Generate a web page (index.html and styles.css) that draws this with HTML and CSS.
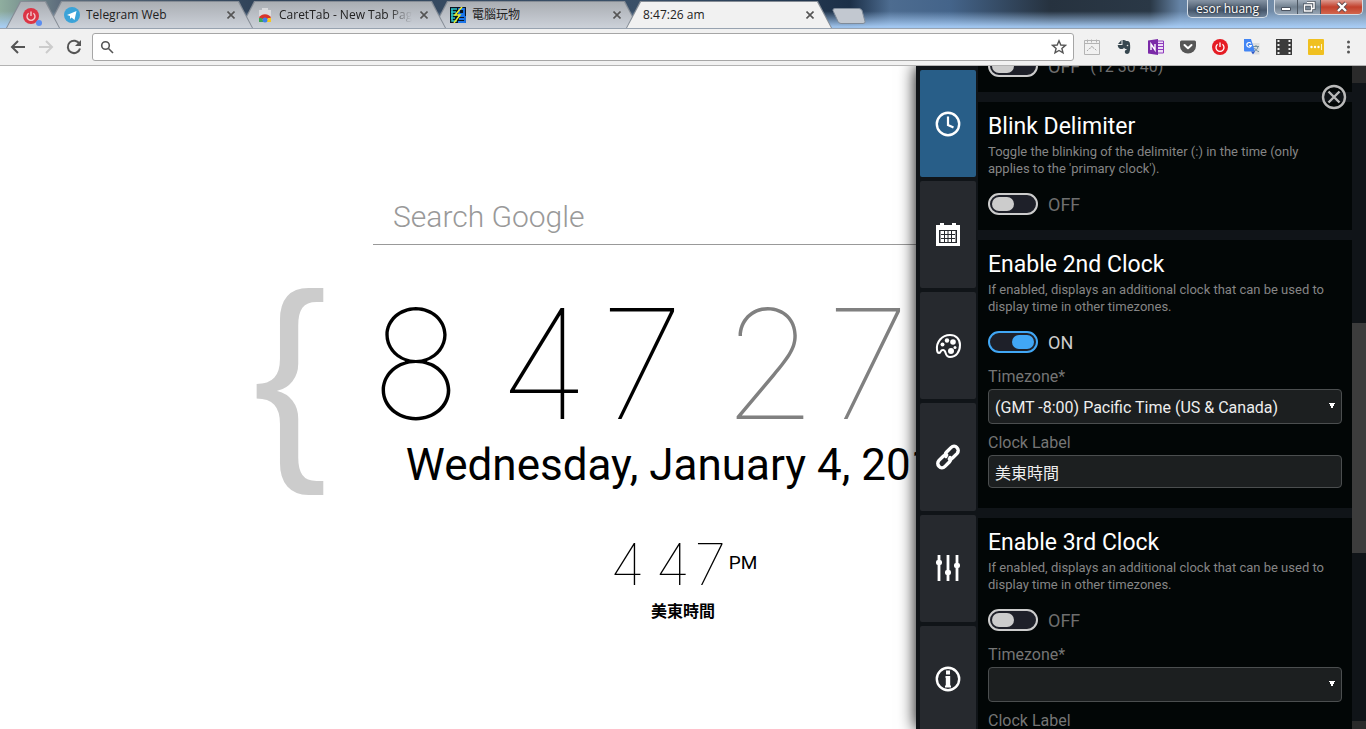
FILE: index.html
```html
<!DOCTYPE html>
<html lang="en">
  <head>
    <meta charset="UTF-8" />
    <meta name="viewport" content="width=device-width, initial-scale=1.0" />
    <title>8:47:26 am</title>
    <link rel="stylesheet" href="styles.css">
  </head>
  <body>
    <header class="browser">
      <div class="tab-strip">
        <div class="tabs">
          <div class="tab pinned">
            <svg class="favicon" viewBox="0 0 16 16">
              <circle cx="8" cy="8" r="8" fill="#dc3545" />
              <path d="M5.6 5.2a4 4 0 1 0 4.8 0M8 3.4V8" fill="none" stroke="#f3c9cc" stroke-width="1.4" />
            </svg>
            <span class="dot"></span>
          </div>
          <div class="tab">
            <svg class="favicon" viewBox="0 0 16 16">
              <circle cx="8" cy="8" r="8" fill="#3ba3d8" />
              <path d="M3 8l9.500-4-2 9L7.500 10.500 6 12V9z" fill="#fff" />
            </svg>
            <span class="tab-title">Telegram Web</span>
            <button class="tab-close" aria-label="Close Telegram Web"><svg viewBox="0 0 8 8"><path d="M.5.5l7 7M7.500.5l-7 7" /></svg></button>
          </div>
          <div class="tab">
            <svg class="favicon" viewBox="0 0 16 16">
              <path d="M2 3h3V1h6v2h3v12H2z" fill="#d9dadd" />
              <path d="M2 11a6.500 6 0 0 1 12 0l-3 1H5z" fill="#d8352b" />
              <path d="M2 11v4h5l-2-4z" fill="#3da554" />
              <path d="M14 11h-4l1 1-2 3h5z" fill="#f7c920" />
              <circle cx="8" cy="13" r="2.500" fill="#3f80e8" />
            </svg>
            <span class="tab-title faded">CaretTab - New Tab Page</span>
            <button class="tab-close" aria-label="Close CaretTab"><svg viewBox="0 0 8 8"><path d="M.5.5l7 7M7.500.5l-7 7" /></svg></button>
          </div>
          <div class="tab">
            <svg class="favicon" viewBox="0 0 16 16">
              <path d="M0 0h16v16H0z" fill="#0a1420" />
              <path d="M1 2h6M1 5h5M1 8h5M1 11h4M2 2v12h5" fill="none" stroke="#2bc5c9" stroke-width="1.5" />
              <path d="M9 2h5v5H9zM8 9h7M9 12h5M8 15h7V9" fill="none" stroke="#1c76ea" stroke-width="1.800" />
              <path d="M12 0L5 8h5L4 16" fill="none" stroke="#e9ee2c" stroke-width="1.500" />
            </svg>
            <span class="tab-title">電腦玩物</span>
            <button class="tab-close" aria-label="Close 電腦玩物"><svg viewBox="0 0 8 8"><path d="M.5.5l7 7M7.500.5l-7 7" /></svg></button>
          </div>
          <div class="tab current">
            <span class="tab-title">8:47:26 am</span>
            <button class="tab-close" aria-label="Close tab"><svg viewBox="0 0 8 8"><path d="M.5.5l7 7M7.500.5l-7 7" /></svg></button>
          </div>
        </div>
        <button class="new-tab" aria-label="New tab">
          <svg viewBox="0 0 34 16"><path d="M3 .5h24q2 0 3 2l3 11q.5 2-2 2H9q-2 0-3-2L1 2.500Q.5.5 3 .5z" /></svg>
        </button>
        <div class="window-controls">
          <button class="user">esor huang</button>
          <div class="window-buttons">
            <button aria-label="Minimize"><svg viewBox="0 0 14 12"><path d="M2.500 6.500h9v3h-9z" fill="#fff" stroke="#4b5360" /></svg></button>
            <button aria-label="Restore"><svg viewBox="0 0 14 12"><path d="M5 1.500h7v6H9.500M2.500 4h7v6h-7z" fill="none" stroke="#414a56" stroke-width="3" /><path d="M5 1.500h7v6H9.500M2.500 4h7v6h-7z" fill="none" stroke="#fff" stroke-width="1.500" /></svg></button>
            <button class="close-window" aria-label="Close window"><svg viewBox="0 0 14 12"><path d="M3 2l8 8M11 2l-8 8" stroke="#5f4a4d" stroke-width="4" /><path d="M3 2l8 8M11 2l-8 8" stroke="#fff" stroke-width="2.400" /></svg></button>
          </div>
        </div>
      </div>
      <div class="toolbar">
        <div class="nav-buttons">
          <button aria-label="Back"><svg viewBox="0 0 16 16"><path d="M15 8H2M8 2L2 8l6 6" /></svg></button>
          <button aria-label="Forward" class="off"><svg viewBox="0 0 16 16"><path d="M1 8h13M8 2l6 6-6 6" /></svg></button>
          <button aria-label="Reload"><svg viewBox="0 0 16 16"><path d="M13.500 5A6.200 6.200 0 1 0 14 9.500" /><path d="M15 1v6H9z" fill="#555" stroke="none" /></svg></button>
        </div>
        <div class="omnibox">
          <svg class="search-icon" viewBox="0 0 14 14"><circle cx="5.500" cy="5.500" r="3.800" /><path d="M8.500 8.500l4.500 4.500" /></svg>
          <input type="text" aria-label="Address" />
          <button class="star" aria-label="Bookmark"><svg viewBox="0 0 16 16"><path d="M8 1.800l1.800 4.200 4.600.4-3.500 3 1.100 4.500L8 11.500l-4 2.400 1.100-4.500-3.500-3 4.600-.4z" /></svg></button>
        </div>
        <div class="extensions">
          <button aria-label="Page chart">
            <svg viewBox="0 0 16 16"><path d="M.5 1.500h15v14H.5zM.5 4.500h15M3.500.5v3M7.500.5v3M12.500.5v3" fill="none" stroke="#b4b4b4" /><path d="M3 12l3-3h1l1-2 1 2h1l3 3" fill="none" stroke="#aaa" stroke-dasharray="2 1" /></svg>
          </button>
          <button aria-label="Evernote">
            <svg viewBox="0 0 16 16"><path d="M5.500 1L2 5h3.500zM6.500 1c2 0 3 .4 3.500 1 2 0 3.500.4 3.800 1.800.6 3 .6 7-.4 9.700-.7 2-4.400 2-4.600-.5-.1-1.700 1-2.300 2.200-2V12.500H10.500V10c-1.200 0-2-.5-2.500-1.500-.4 1.500-2.500 1.800-4.300 1.200C2.500 9 1.700 7.500 1.700 6h4.800z" fill="#37474f" /><circle cx="11.500" cy="6.500" r=".8" fill="#ddd" /></svg>
          </button>
          <button aria-label="OneNote">
            <svg viewBox="0 0 16 16"><path d="M9 2h6.500v12H9z" fill="#efdff7" stroke="#8e3bbd" /><path d="M10 4.500h5M10 7.500h5M10 10.500h5" stroke="#8e3bbd" /><path d="M0 1.500L10 0v16L0 14.500z" fill="#7b2aa8" /><path d="M3 11V5l4 6V5" fill="none" stroke="#fff" stroke-width="1.400" /></svg>
          </button>
          <button aria-label="Pocket">
            <svg viewBox="0 0 16 16"><path d="M1.500 1.500h13q1.500 0 1.500 1.500v4a8 7.500 0 0 1-16 0V3q0-1.500 1.500-1.500z" fill="#565656" /><path d="M4.500 6L8 9.300 11.500 6" fill="none" stroke="#fff" stroke-width="2" stroke-linecap="round" stroke-linejoin="round" /></svg>
          </button>
          <button aria-label="Power">
            <svg viewBox="0 0 16 16"><circle cx="8" cy="8" r="8" fill="#e51c24" /><path d="M5.600 5.200a4 4 0 1 0 4.800 0M8 3.400V8" fill="none" stroke="#fff" stroke-width="1.300" /></svg>
          </button>
          <button aria-label="Google Translate">
            <svg viewBox="0 0 16 16"><path d="M6 4h9.500v11.500H10z" fill="#dedede" /><path d="M9 7.500h6M12 6v1.500M14 7.500c-.5 2.500-2 4-4 5M10.500 9c1 2 2.500 3 4.500 3.700" fill="none" stroke="#72909d" /><path d="M0 0h7l4 12.500H1q-1 0-1-1z" fill="#4285f4" /><path d="M7 12.500h4l-2 3z" fill="#2a56c6" /><path d="M7 4.500a2.300 2.300 0 1 0 .3 2H5" fill="none" stroke="#fff" stroke-width="1.200" /></svg>
          </button>
          <button aria-label="Film">
            <svg viewBox="0 0 16 16"><path d="M0 0h16v16H0z" fill="#3b3b3b" /><path d="M2.500 1v14M13.500 1v14" stroke="#eee" stroke-width="2" stroke-dasharray="2 2" /></svg>
          </button>
          <button aria-label="Password manager">
            <svg viewBox="0 0 16 16"><rect width="16" height="16" rx="1" fill="#f0c020" /><path d="M13.500 5v6" stroke="#fdf3c9" /><circle cx="3.500" cy="8" r="1.200" fill="#fff" /><circle cx="7" cy="8" r="1.200" fill="#fff" /><circle cx="10.500" cy="8" r="1.200" fill="#fff" /></svg>
          </button>
          <button aria-label="Menu">
            <svg viewBox="0 0 16 16"><g fill="#555"><circle cx="8.500" cy="3" r="1.500" /><circle cx="8.500" cy="8" r="1.500" /><circle cx="8.500" cy="13" r="1.500" /></g></svg>
          </button>
        </div>
      </div>
    </header>

    <div class="page">
      <main class="new-tab-page">
        <input class="search" type="text" placeholder="Search Google" aria-label="Search Google" />
        <div class="primary">
          <span class="brace">{</span>
          <div class="primary-body">
            <div class="time">
              <span>8</span>
              <span>47</span>
              <span class="seconds">27</span>
            </div>
            <div class="date">Wednesday, January 4, 2017</div>
          </div>
          <span class="brace">}</span>
        </div>
        <div class="second-clock">
          <div class="second-time">
            <span>4</span>
            <span>47</span>
            <span class="meridiem">PM</span>
          </div>
          <div class="second-label">美東時間</div>
        </div>
      </main>

      <aside class="panel">
        <nav class="panel-nav">
          <button class="active" aria-label="Time">
            <svg viewBox="0 0 26 26"><circle cx="13" cy="13" r="11.200" fill="none" stroke="#fff" stroke-width="2.400" /><path d="M13 5.500V14l5.500 2.500" fill="none" stroke="#fff" stroke-width="2.200" /></svg>
          </button>
          <button aria-label="Date">
            <svg viewBox="0 0 26 26"><path d="M1 3h4V1h4v2h8V1h4v2h4v21H1z" fill="#fff" /><path d="M4 8h18v13H4z" fill="#26292e" /><path d="M5.500 9h15v11h-15z" fill="#fff" /><path d="M6 12.500h14M6 16.500h14M9.500 9v11M13 9v11M16.500 9v11" stroke="#26292e" /></svg>
          </button>
          <button aria-label="Appearance">
            <svg viewBox="0 0 26 26"><path d="M2 17C1 9 7 2 15 2c6 0 10 4 10 10 0 7-4 12-10 12-6 0-3-7-7-7-3 0-2 3-4 3-1 0-1.700-1-2-3z" fill="none" stroke="#fff" stroke-width="2" /><g fill="#fff"><circle cx="7.500" cy="11.500" r="2" /><circle cx="12" cy="7.500" r="2.200" /><circle cx="18" cy="9" r="2.800" /><circle cx="20" cy="14.500" r="1.500" /><circle cx="16" cy="18" r="3" /></g></svg>
          </button>
          <button aria-label="Links">
            <svg viewBox="0 0 26 26"><g fill="none" stroke="#fff" stroke-width="3.400" stroke-linecap="round"><path d="M11 12.500c-1-1.600-.6-3.300.6-4.500L16 3.600c2-2 4.400-1.800 6 0 1.600 1.700 1.700 4.200 0 6L17.500 14c-1 1-2 1.300-3.200 1.100" /><path d="M15 13.500c1 1.600.6 3.300-.6 4.500L10 22.400c-2 2-4.400 1.800-6 0-1.600-1.700-1.700-4.200 0-6L8.500 12c1-1 2-1.300 3.200-1.100" /></g></svg>
          </button>
          <button aria-label="Settings">
            <svg viewBox="0 0 26 26"><path d="M4 0v26M13 0v26M22 0v26" stroke="#fff" stroke-width="2.800" /><g fill="#fff"><rect x="1" y="5" width="6" height="5" rx="2" /><rect x="10" y="15" width="6" height="5" rx="2" /><rect x="19" y="8" width="6" height="5" rx="2" /></g></svg>
          </button>
          <button aria-label="About">
            <svg viewBox="0 0 26 26"><circle cx="13" cy="13" r="11.200" fill="none" stroke="#fff" stroke-width="2.400" /><path d="M11 4.500h4v4h-4zM10.500 10H15.200v9.500h.8v2h-6v-2h.800V12h-.3z" fill="#fff" /></svg>
          </button>
        </nav>

        <div class="settings">
          <section class="setting scrolled">
            <label class="toggle"><input type="checkbox" /> <span>OFF</span> <small>(12 30 40)</small></label>
          </section>
          <section class="setting">
            <h2>Blink Delimiter</h2>
            <p>Toggle the blinking of the delimiter (:) in the time (only applies to the 'primary clock').</p>
            <label class="toggle"><input type="checkbox" /> <span>OFF</span></label>
          </section>
          <section class="setting with-fields">
            <h2>Enable 2nd Clock</h2>
            <p>If enabled, displays an additional clock that can be used to display time in other timezones.</p>
            <label class="toggle"><input type="checkbox" checked /> <span>ON</span></label>
            <div class="fields">
              <div class="field">
                <label for="timezone2">Timezone*</label>
                <select id="timezone2">
                  <option>(GMT -8:00) Pacific Time (US &amp; Canada)</option>
                </select>
              </div>
              <div class="field">
                <label for="label2">Clock Label</label>
                <input type="text" id="label2" value="美東時間" />
              </div>
            </div>
          </section>
          <section class="setting with-fields">
            <h2>Enable 3rd Clock</h2>
            <p>If enabled, displays an additional clock that can be used to display time in other timezones.</p>
            <label class="toggle"><input type="checkbox" /> <span>OFF</span></label>
            <div class="fields">
              <div class="field">
                <label for="timezone3">Timezone*</label>
                <select id="timezone3">
                  <option></option>
                </select>
              </div>
              <div class="field">
                <label for="label3">Clock Label</label>
                <input type="text" id="label3" />
              </div>
            </div>
          </section>
        </div>

        <div class="scrollbar">
          <span class="scroll-end"></span>
          <span class="thumb"></span>
          <span class="scroll-end"></span>
        </div>

        <button class="close-panel" aria-label="Close">
          <svg viewBox="0 0 26 26"><circle cx="13" cy="13" r="11" /><path d="M7.500 7.500l11 11M18.500 7.500l-11 11" /></svg>
        </button>
      </aside>
    </div>
  </body>
</html>
```

FILE: styles.css
```css
* {
  box-sizing: border-box;
}
body {
  margin: 0;
  height: 100vh;
  display: flex;
  flex-direction: column;
  overflow: hidden;
  background-color: #fff;
  font-family: Roboto, 'Noto Sans CJK TC', sans-serif;
}
button {
  padding: 0;
  border: none;
  background: none;
  cursor: pointer;
}
svg {
  display: block;
}

/* browser tabs */
.tab-strip {
  display: flex;
  align-items: flex-start;
  height: 29px;
  padding-left: 6px;
  border-bottom: 1px solid #98a3b0;
  background:
    linear-gradient(to bottom, transparent 40%, rgba(170, 208, 250, 0.9) 95%),
    linear-gradient(to right, #8fae9f, #5d6c7c 60px, #31445a 250px, #3a5068 640px, #1c3048 850px, #4d6c90 890px, #44648a 950px, #26323f 1050px, #2a3846 1150px, #6583a5 1180px, #7f95ab 100%);
}
.tabs {
  display: flex;
  height: 28px;
  padding-top: 1px;
}
.tab {
  position: relative;
  display: flex;
  align-items: center;
  width: 206px;
  margin-left: -13px;
  padding: 0 18px 0 17px;
  background-color: #858c95;
  clip-path: polygon(14px 0, calc(100% - 14px) 0, 100% 100%, 0 100%);
}
.tab::before {
  content: '';
  position: absolute;
  inset: 1px 1px 0;
  z-index: -1;
  background: linear-gradient(to bottom, #aaaeb3, #ccd1d9);
  clip-path: polygon(14px 0, calc(100% - 14px) 0, 100% 100%, 0 100%);
}
.tab:nth-child(1) {
  z-index: 5;
}
.tab:nth-child(2) {
  z-index: 4;
}
.tab:nth-child(3) {
  z-index: 3;
}
.tab:nth-child(4) {
  z-index: 2;
}
.tab.pinned {
  width: 54px;
  margin-left: 0;
}
.tab.current {
  z-index: 6;
}
.tab.current::before {
  background: #f1f1f1;
}
.favicon {
  flex: none;
  width: 16px;
  height: 16px;
}
.pinned .favicon {
  margin-top: 2px;
}
.dot {
  position: absolute;
  right: 18px;
  bottom: 2px;
  width: 6px;
  height: 6px;
  border-radius: 50%;
  background-color: #5b8def;
}
.tab-title {
  flex: 1;
  margin: 0 8px 0 6px;
  overflow: hidden;
  white-space: nowrap;
  color: #222;
  font-family: 'Open Sans', 'Noto Sans CJK TC', sans-serif;
  font-size: 12px;
  line-height: 20px;
}
.current .tab-title {
  margin-left: 0;
}
.tab-title.faded {
  mask-image: linear-gradient(to left, transparent, #000 24px);
}
.tab-close svg {
  width: 8px;
  height: 8px;
  fill: none;
  stroke: #555;
  stroke-width: 1.6;
}
.new-tab {
  margin-top: 8px;
}
.new-tab svg {
  width: 34px;
  height: 16px;
  fill: #c2c8d0;
  stroke: #7f8b99;
}
.window-controls {
  display: flex;
  gap: 6px;
  margin-left: auto;
  padding-right: 3px;
}
.user {
  width: 81px;
  height: 18px;
  border: 1px solid #d5dde6;
  border-top: none;
  border-radius: 0 0 5px 5px;
  background: linear-gradient(to bottom, #8593a3, #46566a 60%, #6d8298);
  color: #fff;
  font-family: 'Open Sans', sans-serif;
  font-size: 12px;
  line-height: 16px;
  text-shadow: 0 0 3px #000;
}
.window-buttons {
  display: flex;
  height: 15px;
  border: 1px solid #d5dde6;
  border-top: none;
  border-radius: 0 0 5px 5px;
  overflow: hidden;
  background: linear-gradient(to bottom, #a5b1be, #71808f 50%, #98a6b5);
}
.window-buttons button {
  display: flex;
  align-items: center;
  justify-content: center;
  width: 23px;
  border-right: 1px solid #4c5662;
}
.window-buttons .close-window {
  width: 41px;
  border-right: none;
  background: linear-gradient(to bottom, #dd9b90, #c2402c 50%, #d2664d);
}
.window-buttons svg {
  width: 14px;
  height: 12px;
}

/* address bar */
.toolbar {
  display: flex;
  align-items: center;
  height: 37px;
  padding: 0 10px;
  border-bottom: 1px solid #b3b3b3;
  background-color: #f1f1f1;
}
.nav-buttons {
  display: flex;
  gap: 12px;
}
.nav-buttons svg {
  width: 16px;
  height: 16px;
  fill: none;
  stroke: #555;
  stroke-width: 2;
}
.nav-buttons .off svg {
  stroke: #ccc;
}
.omnibox {
  flex: 1;
  display: flex;
  align-items: center;
  height: 28px;
  margin-left: 10px;
  padding: 0 6px 0 7px;
  border: 1px solid #a6a6a6;
  border-radius: 3px;
  background-color: #fff;
}
.search-icon {
  width: 14px;
  height: 14px;
  fill: none;
  stroke: #555;
  stroke-width: 1.6;
}
.omnibox input {
  flex: 1;
  border: none;
  outline: none;
}
.star svg {
  width: 16px;
  height: 16px;
  fill: none;
  stroke: #555;
  stroke-width: 1.4;
}
.extensions {
  display: flex;
  gap: 16px;
  margin-left: 10px;
}
.extensions svg {
  width: 16px;
  height: 16px;
}

/* new tab page */
.page {
  position: relative;
  flex: 1;
  min-height: 0;
  overflow: hidden;
}
.new-tab-page {
  display: flex;
  flex-direction: column;
  align-items: center;
  padding-top: 124px;
  color: #000;
}
.search {
  width: 620px;
  height: 55px;
  padding: 0 20px 2px;
  border: none;
  border-bottom: 1px solid #999;
  outline: none;
  font-family: Roboto, sans-serif;
  font-size: 30px;
  font-weight: 300;
}
.search::placeholder {
  color: #999;
}
.primary {
  display: flex;
  align-items: flex-start;
  width: 860px;
  height: 204px;
  margin-top: 39px;
}
.brace {
  width: 70px;
  color: #ccc;
  font-family: 'Liberation Sans', Arial, sans-serif;
  font-size: 222px;
  line-height: 176px;
}
.primary-body {
  flex: 1;
  text-align: center;
}
.time {
  display: flex;
  gap: 30px;
  padding-left: 44px;
  font-family: Inter, sans-serif;
  font-size: 152px;
  font-variant-numeric: tabular-nums;
  font-weight: 100;
  line-height: 160px;
}
.seconds {
  color: #808080;
}
.date {
  font-size: 44px;
  line-height: 42px;
}
.second-clock {
  margin-top: 46px;
  text-align: center;
}
.second-time {
  display: flex;
  align-items: center;
  gap: 8px;
  font-family: Inter, sans-serif;
  font-size: 58px;
  font-variant-numeric: tabular-nums;
  font-weight: 100;
  line-height: 60px;
}
.meridiem {
  margin-left: -8px;
  padding-bottom: 2px;
  font-family: Roboto, sans-serif;
  font-size: 19px;
  font-weight: 400;
  line-height: 24px;
}
.second-label {
  margin-top: 8px;
  font-size: 16px;
  font-weight: 700;
  line-height: 20px;
}

/* settings panel */
.panel {
  position: absolute;
  top: 0;
  right: 0;
  bottom: 0;
  display: flex;
  width: 450px;
  background-color: #101418;
  box-shadow: 0 0 16px #000;
}
.panel-nav {
  display: grid;
  grid-template-rows: repeat(6, 1fr);
  gap: 4px;
  width: 56px;
  height: 100%;
  margin: 4px 2px 0 4px;
}
.panel-nav button {
  display: flex;
  align-items: center;
  justify-content: center;
  border-radius: 2px;
  background-color: #26292e;
}
.panel-nav button.active {
  background-color: #285e88;
}
.panel-nav svg {
  width: 26px;
  height: 26px;
}
.settings {
  flex: 1;
  display: flex;
  flex-direction: column;
  gap: 10px;
  overflow: hidden;
}
.setting {
  flex: none;
  padding: 11px 10px 15px;
  background-color: #020606;
}
.setting.scrolled {
  display: flex;
  align-items: flex-end;
  height: 26px;
  padding-top: 0;
}
.setting.with-fields {
  padding-bottom: 20px;
}
.setting h2 {
  margin: 0 0 2px;
  color: #fff;
  font-size: 23px;
  font-weight: 400;
  line-height: 28px;
}
.setting p {
  margin: 0 0 16px;
  color: #858585;
  font-size: 13px;
  line-height: 17px;
}
.toggle {
  display: flex;
  align-items: center;
  gap: 10px;
  height: 22px;
  color: #6e6e6e;
  font-size: 18px;
}
.toggle small {
  font-size: 16px;
}
.toggle input {
  appearance: none;
  display: flex;
  align-items: center;
  width: 50px;
  height: 22px;
  margin: 0;
  padding: 0 2px;
  border: 2px solid #ccc;
  border-radius: 11px;
  background-color: #1e2029;
}
.toggle input::before {
  content: '';
  width: 22px;
  height: 14px;
  border-radius: 7px;
  background-color: #ccc;
}
.toggle input:checked {
  justify-content: flex-end;
  border-color: #41a7f5;
}
.toggle input:checked::before {
  background-color: #41a7f5;
}
.toggle input:checked + span {
  color: #ccc;
}
.fields {
  display: flex;
  flex-direction: column;
  gap: 9px;
  margin-top: 14px;
}
.field {
  display: flex;
  flex-direction: column;
}
.field label {
  margin-bottom: 2px;
  color: #757575;
  font-size: 16px;
  line-height: 20px;
}
.field select,
.field input {
  height: 33px;
  padding: 0 6px;
  border: 1px solid #4b4e4f;
  border-radius: 4px;
  outline: none;
  background-color: #1c1f20;
  color: #eee;
  font-family: inherit;
  font-size: 16px;
}
.field select {
  appearance: none;
  height: 35px;
  padding-top: 2px;
  background-image: linear-gradient(to bottom right, #fff 50%, transparent 50%), linear-gradient(to bottom left, #fff 50%, transparent 50%);
  background-position: right 6px top 13px, right 9px top 13px;
  background-size: 3px 6px;
  background-repeat: no-repeat;
}
.scrollbar {
  display: flex;
  flex-direction: column;
  justify-content: space-between;
  width: 14px;
}
.scroll-end {
  height: 17px;
  background-color: #2a2a2a;
}
.scroll-end:last-child {
  height: 8px;
}
.thumb {
  height: 230px;
  margin-top: 72px;
  background-color: #3c3c3c;
}
.close-panel {
  position: absolute;
  top: 18px;
  right: 19px;
}
.close-panel svg {
  width: 26px;
  height: 26px;
  fill: none;
  stroke: #b9b9b9;
  stroke-width: 2.4;
}
```
